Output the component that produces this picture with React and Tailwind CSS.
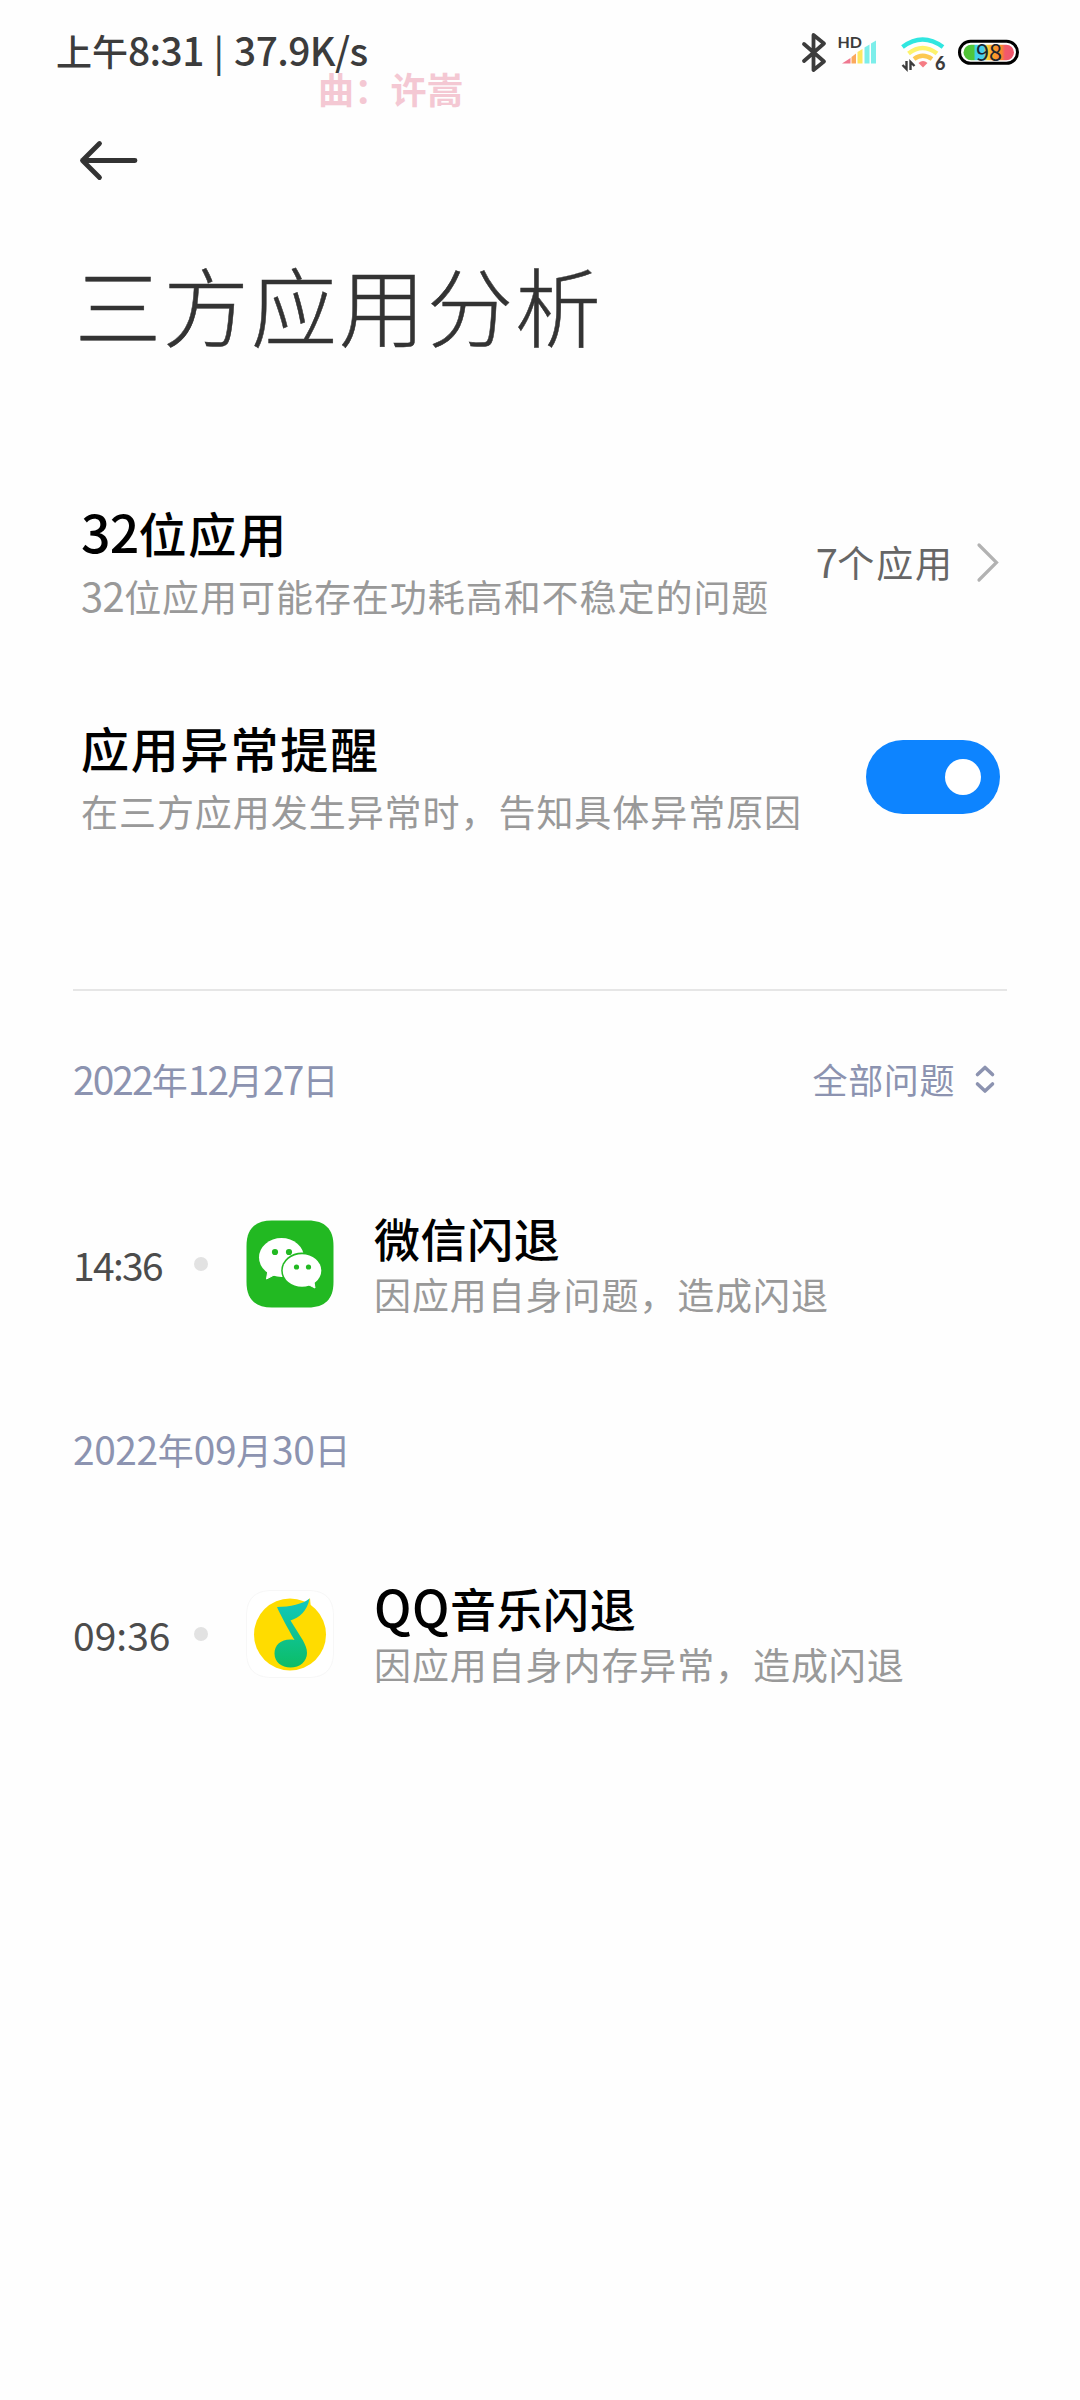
import { useState } from 'react';

const groups = [
    {
        date: '2022年12月27日',
        dateLatin: 'text-[1.08em] leading-none tracking-[-1.9px]',
        time: '14:36',
        timeClass: 'tracking-[-1.7px]',
        icon: WeChatIcon,
        title: '微信闪退',
        desc: '因应用自身问题，造成闪退',
    },
    {
        date: '2022年09月30日',
        dateLatin: 'text-[1.08em] leading-none tracking-[-0.4px]',
        time: '09:36',
        timeClass: 'tracking-normal',
        icon: QQMusicIcon,
        title: 'QQ音乐闪退',
        desc: '因应用自身内存异常，造成闪退',
    },
];

// Latin letters and digits are set slightly larger than the Chinese text
function Mixed({ text, latin = 'text-[1.08em] leading-none tracking-[-0.015em]' }) {
    return text.split(/([0-9A-Za-z:./]+)/).map((part, i) => {
        if (i % 2 === 0) return part;
        return (
            <span key={i} className={latin}>
                {part}
            </span>
        );
    });
}

function WeChatIcon() {
    return (
        <svg viewBox="0 0 88 88" className="h-[88px] w-[88px]">
            <path
                d="M26 0.5H62C79 0.5 87.5 9 87.5 26V62C87.5 79 79 87.5 62 87.5H26C9 87.5 0.5 79 0.5 62V26C0.5 9 9 0.5 26 0.5Z"
                fill="#22b922"
            />
            <path d="M22 50L20.5 59L30 54Z" fill="#fff" stroke="#fff" strokeLinejoin="round" />
            <ellipse cx="35.5" cy="37.5" rx="22.5" ry="19.5" fill="#fff" />
            <ellipse cx="56" cy="50.5" rx="20.8" ry="18" fill="#22b922" />
            <ellipse cx="56" cy="50.5" rx="19.3" ry="16.3" fill="#fff" />
            <path d="M61 64L69 68L67.5 59Z" fill="#fff" stroke="#fff" strokeLinejoin="round" />
            <circle cx="29" cy="32" r="3.1" fill="#22b922" />
            <circle cx="43" cy="32" r="3.1" fill="#22b922" />
            <circle cx="50.5" cy="47" r="2.6" fill="#22b922" />
            <circle cx="62.5" cy="47" r="2.6" fill="#22b922" />
        </svg>
    );
}

function QQMusicIcon() {
    return (
        <svg viewBox="0 0 88 88" className="h-[88px] w-[88px]">
            <defs>
                <linearGradient id="note" x1="0" y1="0" x2="0" y2="1">
                    <stop offset="0" stopColor="#12c8c0" />
                    <stop offset="1" stopColor="#0cbd66" />
                </linearGradient>
            </defs>
            <path
                d="M26 0.5H62C79 0.5 87.5 9 87.5 26V62C87.5 79 79 87.5 62 87.5H26C9 87.5 0.5 79 0.5 62V26C0.5 9 9 0.5 26 0.5Z"
                fill="#fff"
                stroke="#f7f7f7"
            />
            <circle cx="44" cy="44.5" r="36" fill="#ffdc00" />
            <path d="M59 14L64 8L65 20Z" fill="#ffdc00" />
            <path
                d="M63.5 8.5C57 14 44 17 31 17C34 24 41 37 48.5 50C37 48 28.5 54 28.5 63.5C28.5 72 35.5 77.5 44.5 77.5C54 77.5 61 71.5 61 63C61 58 59 54.5 57 50.5L44.5 30.5C53 28 61.5 21 63.5 8.5Z"
                fill="url(#note)"
            />
        </svg>
    );
}

function StatusIcons() {
    return (
        <svg viewBox="0 0 230 50" className="h-[50px] w-[230px]">
            <defs>
                <linearGradient id="battery" x1="0" y1="0" x2="1" y2="0">
                    <stop offset="0" stopColor="#52c234" />
                    <stop offset="0.2" stopColor="#4fc83c" />
                    <stop offset="0.24" stopColor="#3fd0f0" />
                    <stop offset="0.4" stopColor="#48d0ee" />
                    <stop offset="0.46" stopColor="#ffd83c" />
                    <stop offset="0.6" stopColor="#fb9a2c" />
                    <stop offset="0.76" stopColor="#f8862e" />
                    <stop offset="0.82" stopColor="#f25a6c" />
                    <stop offset="1" stopColor="#f0566c" />
                </linearGradient>
            </defs>

            {/* Bluetooth */}
            <path
                d="M14 14L34 31.5L23.5 40V5L34 13.5L14 31"
                fill="none"
                stroke="#3c3c3c"
                strokeWidth="3.8"
                strokeLinecap="round"
                strokeLinejoin="round"
            />

            {/* Mobile signal */}
            <text x="47.5" y="18" fontSize="16" fontWeight="700" fill="#3c3c3c" className="font-['Lato',sans-serif]">
                HD
            </text>
            <path d="M52 33.5L60.5 28V33.5Z" fill="#ef7890" />
            <path d="M61.5 27L66 23.5V33.5H61.5Z" fill="#fba95c" />
            <path d="M67.5 22L72.5 19V33.5H67.5Z" fill="#fde860" />
            <path d="M74.5 17.5L79.5 14.5V33.5H74.5Z" fill="#7ceeea" />
            <path d="M81 13.5L86 10.5V33.5H81Z" fill="#7ceeea" />

            {/* Wi-Fi 6 */}
            <g fill="none" strokeWidth="4.4">
                <path d="M112.5 17Q132.5 2 153 17" stroke="#30e6e0" />
                <path d="M118.5 23.5Q132.5 12.5 147 23.5" stroke="#fdf36c" />
                <path d="M124 29Q132.5 22.5 142 29" stroke="#fcc850" />
            </g>
            <path d="M128.5 33Q133 29 137.5 33L133 37.5Z" fill="#f57c84" />
            <path d="M116.5 31V39L112.5 35M120.5 40V32L124.5 36" fill="none" stroke="#3c3c3c" strokeWidth="2.4" />
            <text x="145" y="40" fontSize="18" fontWeight="900" fill="#3c3c3c" className="font-['Lato',sans-serif]">
                6
            </text>

            {/* Battery */}
            <rect x="169.5" y="11.3" width="58" height="22" rx="11" fill="#fff" stroke="#000" strokeWidth="3" />
            <rect x="173.5" y="14.8" width="50.5" height="15.5" rx="7.7" fill="url(#battery)" />
            <text
                x="199"
                y="30.5"
                fontSize="23.5"
                fontWeight="400"
                textAnchor="middle"
                fill="#1c2430"
                className="font-['Noto_Sans_CJK_SC',sans-serif]"
            >
                98
            </text>
        </svg>
    );
}

function StatusBar() {
    return (
        <div className="relative flex h-[108px] items-start justify-between pr-[60px] pl-14">
            <div className="mt-[26px] h-[50px] text-[36px] leading-[48px] font-medium whitespace-nowrap text-[#3c3c3c] [word-spacing:2px]">
                <Mixed text="上午8:31 | 37.9K/s" />
            </div>
            <div className="mt-[30px]">
                <StatusIcons />
            </div>
            {/* Floating lyric line from the music player */}
            <div className="absolute top-[64px] left-[318px] text-[36px] leading-[48px] font-bold tracking-[0.3px] whitespace-nowrap text-[#f4c8d3]">
                曲：许嵩
            </div>
        </div>
    );
}

function SettingRow({ title, desc, children }) {
    return (
        <div className="flex h-[215px] items-center justify-between pr-20 pl-[81px]">
            <div className="flex flex-col whitespace-nowrap">
                <div className="h-[66px] text-[48px] leading-[64px] font-medium tracking-[1.8px] text-black">
                    <Mixed text={title} />
                </div>
                <div className="h-[58px] text-[37px] leading-[61px] tracking-[0.95px] text-[#999999]">
                    <Mixed text={desc} />
                </div>
            </div>
            {children}
        </div>
    );
}

function RecordGroup({ group, children }) {
    const Icon = group.icon;
    return (
        <section className="h-[370px]">
            <div className="mb-[54px] flex h-[175px] items-center justify-between px-[73px] text-[36px] text-[#8c93b0]">
                <span>
                    <Mixed text={group.date} latin={group.dateLatin} />
                </span>
                {children}
            </div>
            <div className="flex h-[141px] items-start pl-[73px] whitespace-nowrap">
                <div className="flex h-[88px] w-[135px] shrink-0 items-center justify-between text-[39px] text-[#4c4c4c]">
                    <span className={group.timeClass}>{group.time}</span>
                    <span className="h-[14px] w-[14px] rounded-full bg-[#e2e2e2]" />
                </div>
                <div className="ml-[38px]">
                    <Icon />
                </div>
                <div className="-mt-[12px] ml-10">
                    <div className="h-[59px] text-[46px] leading-[58px] font-medium tracking-[0.6px] text-black">
                        <Mixed text={group.title} latin="text-[1.08em] leading-none tracking-[0.01em]" />
                    </div>
                    <div className="h-[54px] text-[37px] leading-[54px] tracking-[0.9px] text-[#999999]">{group.desc}</div>
                </div>
            </div>
        </section>
    );
}

export default function App() {
    const [enabled, setEnabled] = useState(true);

    return (
        <div className="h-[2400px] w-[1080px] overflow-hidden bg-[#fefefe] font-['Noto_Sans_CJK_SC',sans-serif]">
            <StatusBar />

            <div className="flex h-[104px] items-center pl-[78px]">
                <button>
                    <svg
                        viewBox="0 0 60 44"
                        className="h-[44px] w-[60px]"
                        fill="none"
                        stroke="#333"
                        strokeWidth="4.8"
                        strokeLinecap="round"
                        strokeLinejoin="round"
                    >
                        <path d="M21.5 5.5L4.5 22.5L21.5 39.5M4.5 22.5H57" />
                    </svg>
                </button>
            </div>

            <h1 className="h-[242px] pl-[75px] text-[86px] leading-[183px] font-light tracking-[2px] text-[#333] [-webkit-text-stroke:0.5px_#333]">
                三方应用分析
            </h1>

            <SettingRow title="32位应用" desc="32位应用可能存在功耗高和不稳定的问题">
                <div className="flex items-center text-[37px] tracking-[1.9px] text-[#666]">
                    <span className="pt-[2px]">
                        <Mixed text="7个应用" />
                    </span>
                    <svg viewBox="0 0 24 42" className="ml-[22px] h-[42px] w-[24px]" fill="none" stroke="#b2b2b2" strokeWidth="3.2" strokeLinecap="round">
                        <path d="M3 4L20.5 21.5L3 39" />
                    </svg>
                </div>
            </SettingRow>
            <SettingRow title="应用异常提醒" desc="在三方应用发生异常时，告知具体异常原因">
                <button
                    onClick={() => setEnabled(!enabled)}
                    className={
                        enabled
                            ? 'flex h-[74px] w-[134px] items-center justify-end rounded-full bg-[#0d84ff] px-[19px]'
                            : 'flex h-[74px] w-[134px] items-center justify-start rounded-full bg-[#e6e6e6] px-[19px]'
                    }
                >
                    <span className="h-9 w-9 rounded-full bg-white" />
                </button>
            </SettingRow>

            <div className="mx-[73px] mt-[105px] h-[2px] bg-[#e6e6e6]" />

            <RecordGroup group={groups[0]}>
                <div className="flex items-center pt-px pr-[10px]">
                    <span className="text-[35px] tracking-[0.6px]">全部问题</span>
                    <svg
                        viewBox="0 0 24 32"
                        className="ml-[18px] h-[32px] w-[24px]"
                        fill="none"
                        stroke="#8c93b0"
                        strokeWidth="3.6"
                        strokeLinecap="round"
                        strokeLinejoin="round"
                    >
                        <path d="M4.5 11.5L12 4.5L19.5 11.5M4.5 21L12 28L19.5 21" />
                    </svg>
                </div>
            </RecordGroup>
            <RecordGroup group={groups[1]} />
        </div>
    );
}
